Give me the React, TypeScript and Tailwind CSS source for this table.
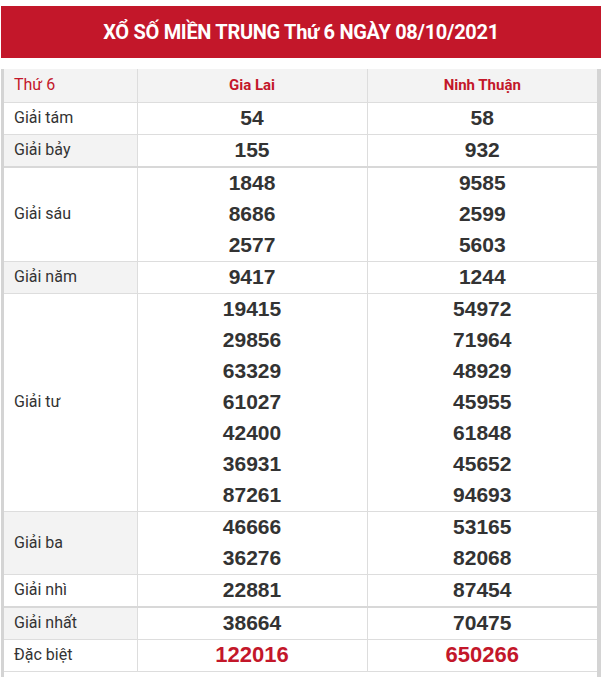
const rows: { label: string; a: string[]; b: string[]; shade?: boolean; thick?: boolean; special?: boolean }[] = [
  { label: "Giải tám", a: ["54"], b: ["58"] },
  { label: "Giải bảy", a: ["155"], b: ["932"], shade: true, thick: true },
  { label: "Giải sáu", a: ["1848", "8686", "2577"], b: ["9585", "2599", "5603"] },
  { label: "Giải năm", a: ["9417"], b: ["1244"], shade: true },
  {
    label: "Giải tư",
    a: ["19415", "29856", "63329", "61027", "42400", "36931", "87261"],
    b: ["54972", "71964", "48929", "45955", "61848", "45652", "94693"],
  },
  { label: "Giải ba", a: ["46666", "36276"], b: ["53165", "82068"], shade: true },
  { label: "Giải nhì", a: ["22881"], b: ["87454"], thick: true },
  { label: "Giải nhất", a: ["38664"], b: ["70475"], shade: true },
  { label: "Đặc biệt", a: ["122016"], b: ["650266"], special: true },
];

function Numbers({ list, special }: { list: string[]; special?: boolean }) {
  return (
    <div className="flex flex-col items-center">
      {list.map((n, i) => (
        <div
          key={i}
          className={
            special
              ? "h-[31px] leading-[30px] text-[22px] font-bold text-[#c3172a] font-['Liberation_Sans',Arial,sans-serif]"
              : "h-[31px] leading-[30px] text-[21px] font-bold text-[#333] font-['Liberation_Sans',Arial,sans-serif]"
          }
        >
          {n}
        </div>
      ))}
    </div>
  );
}

export default function App() {
  return (
    <div className="w-[608px] h-[677px] bg-white font-['Roboto',sans-serif] pt-[6px] pl-px overflow-hidden">
      <div className="w-[600px] h-[52px] bg-[#c3172a] flex items-center justify-center">
        <h1 className="text-white font-bold text-[20px] tracking-[-0.3px]">
          XỔ SỐ MIỀN TRUNG Thứ 6 NGÀY 08/10/2021
        </h1>
      </div>

      <div className="mt-[11px] w-[600px] border-l-[3px] border-r-[4px] border-[#d4d4d4] pb-[10px]">
        <table className="w-full table-fixed border-collapse">
          <colgroup>
            <col className="w-[133px]" />
            <col className="w-[230px]" />
            <col className="w-[230px]" />
          </colgroup>
          <thead>
            <tr className="bg-[#f3f3f3] h-[33px]">
              <th className="border-b border-r border-[#dddddd] text-left pl-[10px] font-normal text-[16px] text-[#c3172a]">
                Thứ 6
              </th>
              <th className="border-b border-r border-[#dddddd] font-bold text-[15px] text-[#c3172a]">Gia Lai</th>
              <th className="border-b border-[#dddddd] font-bold text-[15px] text-[#c3172a]">Ninh Thuận</th>
            </tr>
          </thead>
          <tbody>
            {rows.map((r) => {
              const bottom = r.thick ? "border-b-2 border-b-[#d8d8d8]" : "border-b border-b-[#dddddd]";
              return (
                <tr key={r.label}>
                  <td
                    className={`${bottom} border-r border-r-[#dddddd] pl-[10px] text-[16px] text-[#333] align-middle ${
                      r.shade ? "bg-[#f3f3f3]" : "bg-white"
                    }`}
                  >
                    {r.label}
                  </td>
                  <td className={`${bottom} border-r border-r-[#dddddd] p-0`}>
                    <Numbers list={r.a} special={r.special} />
                  </td>
                  <td className={`${bottom} p-0`}>
                    <Numbers list={r.b} special={r.special} />
                  </td>
                </tr>
              );
            })}
          </tbody>
        </table>
      </div>
    </div>
  );
}
